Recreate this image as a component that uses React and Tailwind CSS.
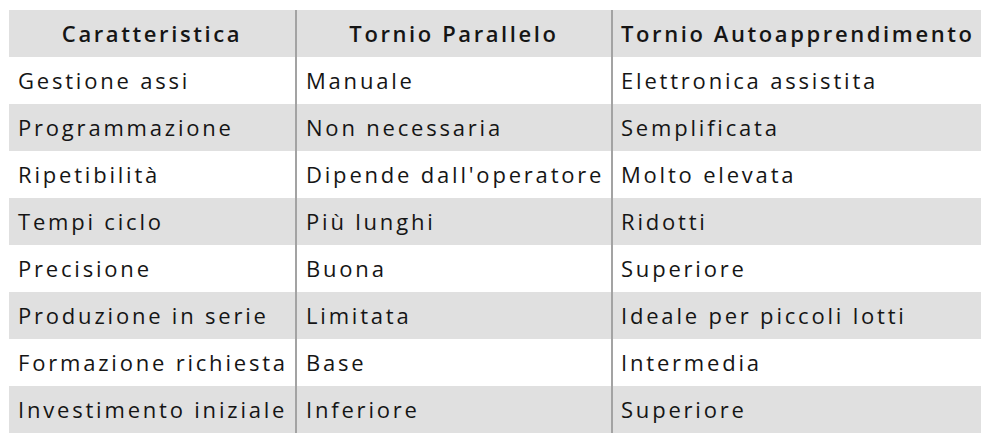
import React from 'react';

const rows = [
    ["Gestione assi", "Manuale", "Elettronica assistita"],
    ["Programmazione", "Non necessaria", "Semplificata"],
    ["Ripetibilità", "Dipende dall'operatore", "Molto elevata"],
    ["Tempi ciclo", "Più lunghi", "Ridotti"],
    ["Precisione", "Buona", "Superiore"],
    ["Produzione in serie", "Limitata", "Ideale per piccoli lotti"],
    ["Formazione richiesta", "Base", "Intermedia"],
    ["Investimento iniziale", "Inferiore", "Superiore"],
];

const App = () => {
    return (
        <div className="w-[988px] h-[436px] bg-white pt-[10px] pl-[9px]" style={{ fontFamily: '"Open Sans", "Noto Sans", sans-serif' }}>
            <table className="table-fixed border-collapse w-[972px] text-[22px] tracking-[2.8px] text-[#151515]">
                <colgroup>
                    <col className="w-[287px]" />
                    <col className="w-[316px]" />
                    <col className="w-[369px]" />
                </colgroup>
                <thead>
                    <tr className="h-[47px] bg-[#e0e0e0] tracking-[2.6px]">
                        <th className="font-semibold text-center px-[9px] whitespace-nowrap">Caratteristica</th>
                        <th className="font-semibold text-center px-[9px] border-l-2 border-[#a3a3a3] whitespace-nowrap">Tornio Parallelo</th>
                        <th className="font-semibold text-left px-[8px] border-l-2 border-[#a3a3a3] whitespace-nowrap">Tornio Autoapprendimento</th>
                    </tr>
                </thead>
                <tbody>
                    {rows.map((r, i) =>
                        <tr key={i} className={i % 2 === 0 ? "h-[47px] bg-white" : "h-[47px] bg-[#e0e0e0]"}>
                            <td className="px-[9px] whitespace-nowrap">{r[0]}</td>
                            <td className="px-[9px] whitespace-nowrap border-l-2 border-[#a3a3a3]">{r[1]}</td>
                            <td className="px-[8px] whitespace-nowrap border-l-2 border-[#a3a3a3]">{r[2]}</td>
                        </tr>
                    )}
                </tbody>
            </table>
        </div>
    );
};

export default App;
